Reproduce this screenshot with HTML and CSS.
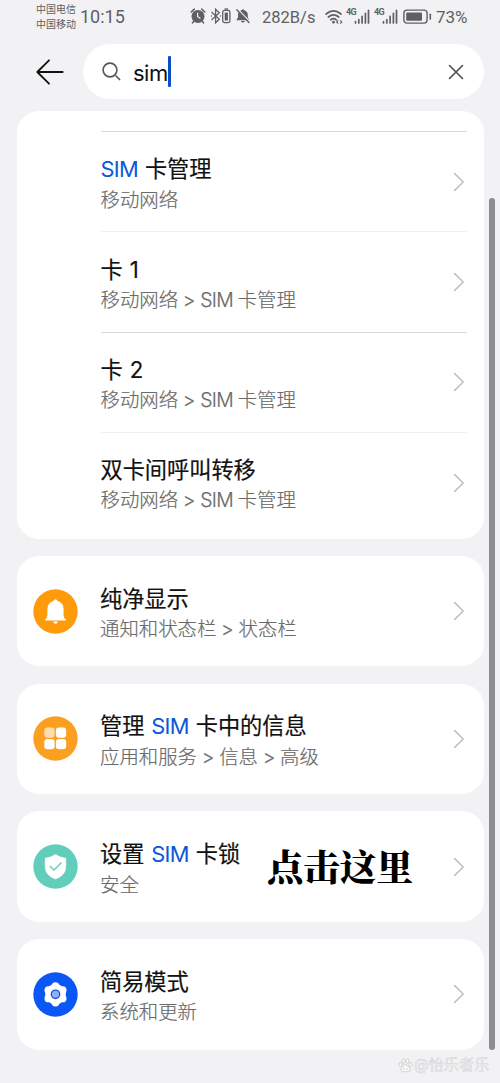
FILE: index.html
```html
<!DOCTYPE html>
<html lang="zh-CN">
<head>
<meta charset="utf-8">
<title>设置搜索</title>
<link rel="stylesheet" href="styles.css">
</head>
<body>
<svg class="defs" width="0" height="0">
  <defs>
    <symbol id="chev" viewBox="0 0 12 20"><path d="M1.7 1.6L10.2 10L1.7 18.4" fill="none" stroke="#c2c2c2" stroke-width="1.7" stroke-linecap="round" stroke-linejoin="round"/></symbol>
    <symbol id="signal" viewBox="0 0 16 15"><path d="M1.5 14v-1.5M4.8 14V10.5M8.1 14V7.3M11.4 14V4.3M14.5 14V1.3" fill="none" stroke="#5f6062" stroke-width="1.7" stroke-linecap="round"/></symbol>
  </defs>
</svg>
<div class="screen">
  <header class="status">
    <div class="carriers"><span>中国电信</span><span>中国移动</span></div>
    <span class="time">10:15</span>
    <svg class="alerts" width="60" height="18" viewBox="0 0 60 18">
      <circle cx="8" cy="9.4" r="6.5" fill="#5f6062"/>
      <path d="M1.2 5L4.3 2.2M14.8 5L11.7 2.2M3.9 14.2L2.5 15.8M12.1 14.2L13.5 15.8" stroke="#5f6062" stroke-width="1.6" stroke-linecap="round"/>
      <path d="M7.6 5.8V9.5L10.4 11.5" fill="none" stroke="#f1f2f4" stroke-width="1.2"/>
      <path d="M21.5 5L29.3 12.3L25.6 15.8V2.2L29.3 5.7L21.5 13" fill="none" stroke="#5f6062" stroke-width="1.3"/>
      <path d="M21 9h1M29.8 9h1" stroke="#5f6062" stroke-width="1.5"/>
      <rect x="32.7" y="3.4" width="7.2" height="12.2" rx="1.8" fill="none" stroke="#5f6062" stroke-width="1.3"/>
      <rect x="34.7" y="5.6" width="3.2" height="7.9" fill="#5f6062"/>
      <path d="M34.5 2h3.6" stroke="#5f6062" stroke-width="1.3"/>
      <path d="M46.3 13.2L48 10.6V7.6Q48.3 4 51.6 3.2Q53 1.2 54.3 3.2Q57.8 4.2 57.8 8V10.6L59.3 13.2ZM50.8 14H55Q53 17 50.8 14Z" fill="#5f6062"/>
      <path d="M48 2.6L60 15" stroke="#f1f2f4" stroke-width="1.4"/>
      <path d="M46.8 2.8L59 15.6" stroke="#5f6062" stroke-width="1.4" stroke-linecap="round"/>
    </svg>
    <span class="speed">282B/s</span>
    <svg class="wifi" width="18" height="16" viewBox="0 0 18 16">
      <path d="M1.1 5Q8.5-1.4 16 5M3.4 8Q8.5 3.6 13.7 8M5.7 10.8Q8.5 8.4 11.3 10.8" fill="none" stroke="#5f6062" stroke-width="1.7" stroke-linecap="round"/>
      <circle cx="8.5" cy="13.2" r="1.4" fill="#5f6062"/>
      <path d="M13.2 11.3L11.6 13L13.2 14.7M15.2 11.3L16.8 13L15.2 14.7" fill="none" stroke="#5f6062" stroke-width="1.1"/>
    </svg>
    <span class="gen">4G</span><svg class="bars" width="16" height="15"><use href="#signal"/></svg>
    <span class="gen second">4G</span><svg class="bars" width="16" height="15"><use href="#signal"/></svg>
    <svg class="battery" width="29" height="16" viewBox="0 0 29 16">
      <rect x=".9" y="1.1" width="23.2" height="13" rx="3" fill="none" stroke="#5f6062" stroke-width="1.4"/>
      <rect x="3.2" y="3.4" width="15.8" height="8.4" rx="1" fill="#5f6062"/>
      <path d="M27.3 5.3v4.8" stroke="#5f6062" stroke-width="1.6" stroke-linecap="round"/>
    </svg>
    <span class="percent">73%</span>
  </header>

  <div class="searchbar">
    <svg class="back" width="28" height="26" viewBox="0 0 28 26"><path d="M26.7 13H1.3M13 1.3L1.3 13L13 24.7" fill="none" stroke="#111" stroke-width="1.8" stroke-linecap="round" stroke-linejoin="round"/></svg>
    <div class="field">
      <svg width="19" height="19" viewBox="0 0 19 19"><circle cx="8" cy="8" r="6.9" fill="none" stroke="#555" stroke-width="1.6"/><path d="M14 14L17.6 17.5" stroke="#555" stroke-width="1.7" stroke-linecap="round"/></svg>
      <span class="query">sim</span><i class="caret"></i>
      <svg class="clear" width="16" height="16" viewBox="0 0 16 16"><path d="M1.5 1.5L14.5 14.5M14.5 1.5L1.5 14.5" stroke="#4d4d4d" stroke-width="1.6" stroke-linecap="round"/></svg>
    </div>
  </div>

  <main class="results">
    <section class="card group">
      <div class="row">
        <div class="text"><h3><b class="hit">SIM</b> 卡管理</h3><p>移动网络</p></div>
        <svg class="chev"><use href="#chev"/></svg>
      </div>
      <div class="row faint">
        <div class="text"><h3>卡 1</h3><p>移动网络 &gt; <span class="sim">SIM</span> 卡管理</p></div>
        <svg class="chev"><use href="#chev"/></svg>
      </div>
      <div class="row">
        <div class="text"><h3>卡 2</h3><p>移动网络 &gt; <span class="sim">SIM</span> 卡管理</p></div>
        <svg class="chev"><use href="#chev"/></svg>
      </div>
      <div class="row faint">
        <div class="text"><h3>双卡间呼叫转移</h3><p>移动网络 &gt; <span class="sim">SIM</span> 卡管理</p></div>
        <svg class="chev"><use href="#chev"/></svg>
      </div>
    </section>

    <section class="card single">
      <svg class="icon" viewBox="0 0 45 45"><circle cx="22.5" cy="22.5" r="22.2" fill="#ff9a0a"/><path d="M22.5 10.3Q24 10.3 24.7 12Q30.6 14 30.6 20V26.5Q30.6 29 32.9 30.3V31.6H12.1V30.3Q14.4 29 14.4 26.5V20Q14.4 14 20.3 12Q21 10.3 22.5 10.3ZM20.2 32.6H24.8Q24.3 34.8 22.5 34.8Q20.7 34.8 20.2 32.6Z" fill="#fff"/></svg>
      <div class="text"><h3>纯净显示</h3><p>通知和状态栏 &gt; 状态栏</p></div>
      <svg class="chev"><use href="#chev"/></svg>
    </section>

    <section class="card single">
      <svg class="icon" viewBox="0 0 45 45"><circle cx="22.5" cy="22.5" r="22.2" fill="#fb9f20"/><g fill="#fff"><rect x="11.3" y="11.5" width="10.3" height="10.2" rx="3" fill="#fddcae"/><rect x="22.9" y="11.5" width="10.3" height="10.2" rx="3"/><rect x="11.3" y="23.1" width="10.3" height="10.2" rx="3"/><rect x="22.9" y="23.1" width="10.3" height="10.2" rx="3"/></g></svg>
      <div class="text"><h3>管理 <b class="hit">SIM</b> 卡中的信息</h3><p>应用和服务 &gt; 信息 &gt; 高级</p></div>
      <svg class="chev"><use href="#chev"/></svg>
    </section>

    <section class="card single">
      <svg class="icon" viewBox="0 0 45 45"><circle cx="22.5" cy="22.5" r="22.2" fill="#61cdbb"/><path d="M22.5 10.5Q26.8 13.5 32.8 14.2V22.5Q32.8 31.5 22.5 35Q12.2 31.5 12.2 22.5V14.2Q18.2 13.5 22.5 10.5Z" fill="#fff" stroke="#fff" stroke-linejoin="round" stroke-width=".6"/><path d="M17.4 22.5L21 26L28 19" fill="none" stroke="#75cfc0" stroke-width="1.7" stroke-linecap="round" stroke-linejoin="round"/></svg>
      <div class="text"><h3>设置 <b class="hit">SIM</b> 卡锁</h3><p>安全</p></div>
      <strong class="callout">点击这里</strong>
      <svg class="chev"><use href="#chev"/></svg>
    </section>

    <section class="card single">
      <svg class="icon" viewBox="0 0 45 45"><circle cx="22.5" cy="22.5" r="22.2" fill="#0b57f5"/><g fill="#fff"><circle cx="22.5" cy="22.3" r="10.3"/><circle cx="22.5" cy="14.1" r="3.9"/><circle cx="29.6" cy="18.2" r="3.9"/><circle cx="29.6" cy="26.4" r="3.9"/><circle cx="22.5" cy="30.5" r="3.9"/><circle cx="15.4" cy="26.4" r="3.9"/><circle cx="15.4" cy="18.2" r="3.9"/></g><circle cx="22.5" cy="22.3" r="4.2" fill="#8db0f8" stroke="#1c55d3" stroke-width="1.3"/></svg>
      <div class="text"><h3>简易模式</h3><p>系统和更新</p></div>
      <svg class="chev"><use href="#chev"/></svg>
    </section>
  </main>
  <i class="scroll"></i>
  <div class="mark">
    <svg width="15" height="15" viewBox="0 0 15 15" fill="#fafafa" stroke="#c8c9cb" stroke-width=".9"><ellipse cx="2.5" cy="6.5" rx="1.6" ry="2.1"/><ellipse cx="5.5" cy="3" rx="1.6" ry="2.2"/><ellipse cx="9.5" cy="3" rx="1.6" ry="2.2"/><ellipse cx="12.5" cy="6.5" rx="1.6" ry="2.1"/><path d="M7.5 6.5Q9.3 6.7 10.3 8.7Q13.3 10.8 11.8 13Q10.5 14.5 7.5 13.6Q4.5 14.5 3.2 13Q1.7 10.8 4.7 8.7Q5.7 6.7 7.5 6.5Z"/><path d="M5.8 10v2M9 10v2" /></svg>
    <span>@怡乐者乐</span>
  </div>
</div>
</body>
</html>
```
FILE: styles.css
```css
* { box-sizing: border-box; }
body { margin: 0; background: #f2f2f4; }
.defs { position: absolute; }
.screen {
  position: relative;
  width: 500px;
  height: 1083px;
  overflow: hidden;
  background: #f2f2f4;
  font-family: Inter, "Noto Sans CJK SC", sans-serif;
  color: #111;
}
svg { display: block; flex: none; }

.status {
  display: flex;
  align-items: center;
  height: 34px;
  padding-left: 36px;
  color: #5f6062;
  font-family: Roboto, "Noto Sans CJK SC", sans-serif;
  white-space: nowrap;
}
.carriers {
  display: flex;
  flex-direction: column;
  width: 44px;
  font-size: 10px;
  line-height: 15px;
  margin-top: -1px;
}
.time { width: 110px; font-size: 18px; margin-top: -1px; }
.alerts { margin-top: -2px; }
.speed { width: 63px; margin-left: 12px; font-size: 16.5px; }
.gen { align-self: flex-start; margin: 8px 0 0 3px; width: 9px; font: 700 9px/9px "Liberation Sans Narrow", Roboto, sans-serif; letter-spacing: -0.6px; }
.gen.second { margin-left: 4px; }
.bars { margin-left: -1px; margin-top: -1px; }
.battery { margin-left: 5px; margin-top: -1px; }
.percent { margin-left: 4px; font-size: 17px; }

.searchbar { display: flex; align-items: center; margin-top: 10px; padding-left: 36px; }
.field {
  display: flex;
  align-items: center;
  width: 401px;
  height: 55px;
  margin-left: 19px;
  padding: 0 20px 0 19px;
  border-radius: 28px;
  background: #fff;
}
.query { margin: 3px 0 0 12px; font-size: 22px; line-height: 30px; letter-spacing: -0.5px; }
.caret { width: 3px; height: 31px; border-radius: 1px; background: #0b4fc4; }
.clear { margin-left: auto; }

.results { display: flex; flex-direction: column; gap: 17.3px; margin: 12px 0 0 16.5px; width: 467.5px; }
.card { border-radius: 22px; background: #fff; }
.group { height: 427.5px; padding: 20px 17px 0 84px; }
.row { display: flex; align-items: center; height: 100.4px; border-top: 1px solid #dadada; }
.row.faint { border-top-color: #eee; }
.single { display: flex; align-items: center; height: 110.5px; padding: 0 17px 0 16.5px; }
.icon { width: 45px; height: 45px; margin-right: 22px; }
.text { flex: 1; padding-top: 5px; white-space: nowrap; }
h3, p { margin: 0; line-height: 31px; }
h3 { font-size: 22.2px; font-weight: 400; word-spacing: 0.7px; -webkit-text-stroke: 0.2px currentColor; }
p { font-size: 19.4px; color: #6a6a6a; font-weight: 300; word-spacing: -0.7px; -webkit-text-stroke: 0.2px currentColor; }
.hit { color: #0b57d8; font-weight: 400; font-size: 21.8px; letter-spacing: -0.7px; -webkit-text-stroke: 0; }
.sim { letter-spacing: -0.7px; }
.chev { width: 12px; height: 20px; margin-right: 2px; }
.callout {
  width: 148px;
  margin: -4px 38px 0 0;
  font: 900 36.5px/44px "Noto Serif CJK SC", "Source Han Serif SC", "Noto Sans CJK SC", serif;
  color: #000;
  white-space: nowrap;
}
.scroll { position: absolute; left: 489px; top: 198px; width: 6px; height: 852px; border-radius: 3px; background: #8d8e90; }
.mark {
  position: absolute;
  left: 398px;
  top: 1056px;
  display: flex;
  align-items: center;
  gap: 1px;
  color: #f2f2f3;
  font-size: 15.2px;
  line-height: 18px;
  -webkit-text-stroke: 0.5px #d2d3d5;
}
```
